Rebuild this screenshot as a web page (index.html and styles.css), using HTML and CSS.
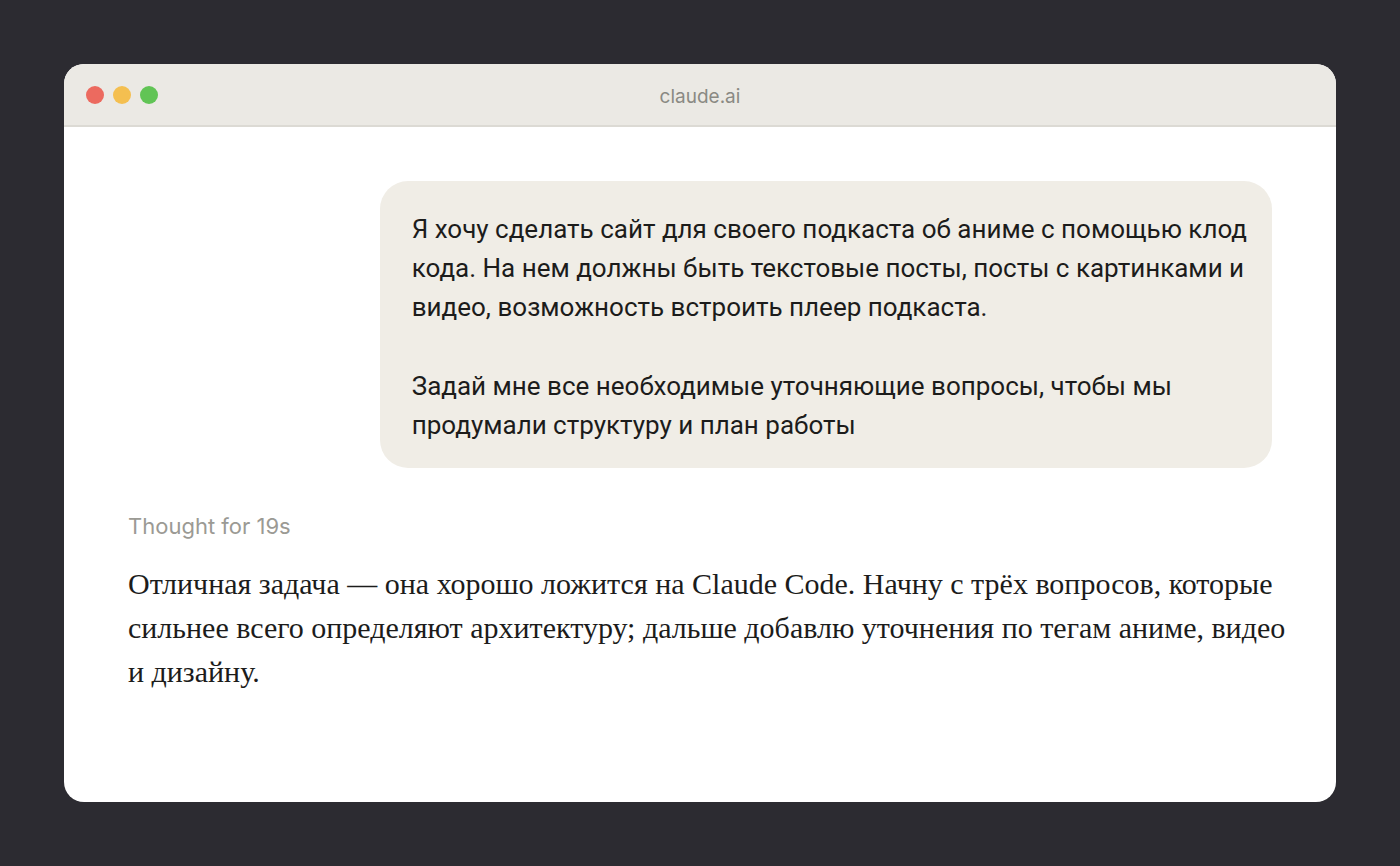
FILE: index.html
```html
<!DOCTYPE html>
<html lang="ru">
<head>
<meta charset="utf-8">
<meta name="viewport" content="width=device-width, initial-scale=1">
<title>claude.ai</title>
<link rel="stylesheet" href="styles.css">
</head>
<body>
<div class="window">
  <header class="titlebar">
    <div class="lights">
      <span class="light light-close"></span>
      <span class="light light-minimize"></span>
      <span class="light light-zoom"></span>
    </div>
    <div class="address">claude.ai</div>
  </header>
  <main class="chat">
    <div class="message">
      <p>Я хочу сделать сайт для своего подкаста об аниме с помощью клод<br>кода. На нем должны быть текстовые посты, посты с картинками и<br>видео, возможность встроить плеер подкаста.</p>
      <p>Задай мне все необходимые уточняющие вопросы, чтобы мы<br>продумали структуру и план работы</p>
    </div>
    <div class="thought">Thought for 19s</div>
    <p class="answer">Отличная задача — она хорошо ложится на Claude Code. Начну с трёх вопросов, которые<br>сильнее всего определяют архитектуру; дальше добавлю уточнения по тегам аниме, видео<br>и дизайну.</p>
  </main>
</div>
</body>
</html>
```
FILE: styles.css
```css
* {
  box-sizing: border-box;
}

body {
  margin: 0;
  min-height: 100vh;
  padding: 64px;
  display: flex;
  background: #2c2b31;
  color: #1c1c1b;
  font-family: Inter, "Liberation Sans", sans-serif;
}

p {
  margin: 0;
}

.window {
  flex: 1;
  min-width: 0;
  display: flex;
  flex-direction: column;
  border-radius: 20px;
  overflow: hidden;
  background: #ffffff;
}

.titlebar {
  display: grid;
  grid-template-columns: 1fr auto 1fr;
  align-items: center;
  height: 63px;
  padding: 0 22px;
  background: #ebe9e4;
  border-bottom: 2px solid #dcdad4;
}

.lights {
  display: flex;
  gap: 9px;
}

.light {
  width: 18px;
  height: 18px;
  border-radius: 50%;
}

.light-close {
  background: #ec6a5f;
}

.light-minimize {
  background: #f4bf50;
}

.light-zoom {
  background: #61c455;
}

.address {
  padding-top: 4px;
  font-size: 19px;
  line-height: 24px;
  color: #8a8983;
}

.chat {
  flex: 1;
  display: flex;
  flex-direction: column;
  padding: 54px 64px;
}

.message {
  display: flex;
  flex-direction: column;
  gap: 40px;
  align-self: flex-end;
  width: 78%;
  padding: 29px 32px 23px;
  border-radius: 28px;
  background: #f0ede6;
  font-family: Roboto, "Liberation Sans", sans-serif;
  font-size: 26px;
  line-height: 39px;
  white-space: nowrap;
}

.thought {
  margin-top: 43px;
  font-size: 22px;
  line-height: 30px;
  color: #9b9a94;
}

.answer {
  margin-top: 21px;
  font-family: "Liberation Serif", serif;
  font-size: 30px;
  line-height: 44px;
  white-space: nowrap;
}
```
